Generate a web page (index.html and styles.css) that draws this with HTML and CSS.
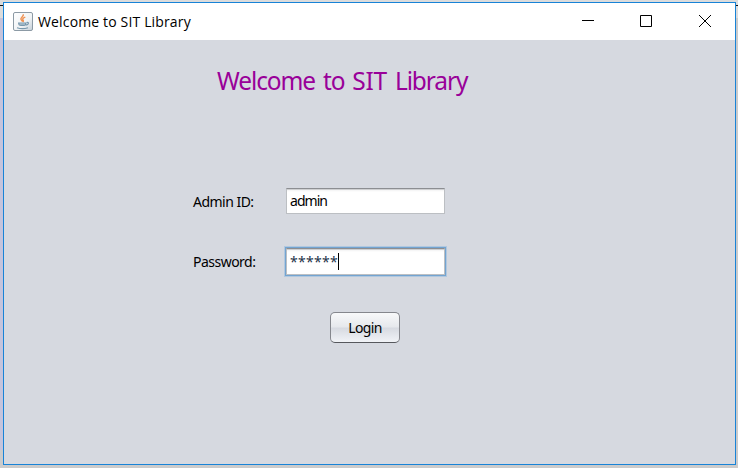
FILE: index.html
```html
<!DOCTYPE html>
<html lang="en">
<head>
<meta charset="utf-8">
<title>Welcome to SIT Library</title>
<link rel="stylesheet" href="styles.css">
</head>
<body>
<main class="window">
  <header class="titlebar">
    <svg class="app-icon" width="20" height="19" viewBox="0 0 20 19">
      <defs><linearGradient id="tile" x2="1" y2="1"><stop offset="0" stop-color="#fff"/><stop offset=".6" stop-color="#f0f3f5"/><stop offset="1" stop-color="#c3ced7"/></linearGradient></defs>
      <rect x=".5" y=".5" width="19" height="18" rx="1.5" fill="url(#tile)" stroke="#8c9aa5"/>
      <path d="M10.200 2.300c1 2.200-3.200 3-2.200 5.200.3.8 1.200 1.300 1.500 2M12.300 5.200c-2.300.8-3.200 1.700-2.200 2.900.6.8.3 1.400-.4 1.900" fill="none" stroke="#ef9050" stroke-width="1.400"/>
      <path d="M5 10.500h8.500c0 2.500-1 3.500-2.500 3.500H8c-2 0-3-1-3-3.500z" fill="#7898ad"/>
      <path d="M6.500 12h5.500" stroke="#d3dfe7" stroke-width=".8"/>
      <path d="M4 15.700c3 1 8 1 11 0M13.500 10.500c2.800-.7 2.500 2-.7 2.700" fill="none" stroke="#7898ad" stroke-width="1.200"/>
    </svg>
    <span class="caption">Welcome to SIT Library</span>
    <div class="controls">
      <svg width="12" height="12" viewBox="0 0 12 12"><path d="M0 5.500h12"/></svg>
      <svg width="12" height="12" viewBox="0 0 12 12"><path d="M.5.5h11v11H.5z"/></svg>
      <svg width="12" height="12" viewBox="0 0 12 12"><path d="M1 0l12 12M13 0L1 12"/></svg>
    </div>
  </header>
  <section class="content">
    <h1 class="heading">Welcome to <span class="initials">SIT</span> Library</h1>
    <form class="login">
      <div class="row">
        <span class="label">Admin ID:</span>
        <div class="field"><span class="value">admin</span></div>
      </div>
      <div class="row">
        <span class="label">Password:</span>
        <div class="field focused"><span class="stars">******</span><i class="caret"></i></div>
      </div>
      <button class="button" type="button">Login</button>
    </form>
  </section>
</main>
</body>
</html>
```
FILE: styles.css
```css
* { box-sizing: border-box; }
body {
  margin: 0;
  width: 738px;
  height: 468px;
  padding: 2px 2px 3px 3px;
  overflow: hidden;
  background:
    linear-gradient(#111, #111) 0 5px / 3px 1px no-repeat,
    linear-gradient(#111, #111) 736px 5px / 2px 1px no-repeat,
    linear-gradient(#c5c4dc, #c5c4dc) 0 18px / 3px 432px no-repeat,
    linear-gradient(#dcdcdc, #dcdcdc) 0 0 / 738px 18px no-repeat,
    #cbcbcb;
  color: #000;
  font-family: "Noto Sans", "DejaVu Sans", sans-serif;
}
.window {
  width: 733px;
  height: 463px;
  border: 1px solid #1883d7;
  background: #d6d9e0;
}
.titlebar {
  display: flex;
  align-items: center;
  height: 37px;
  padding: 0 25px 0 9px;
  background: #fff;
}
.app-icon { margin-top: -1px; }
.caption {
  margin: 1px 0 0 5px;
  font: 14px/20px "Open Sans", sans-serif;
  letter-spacing: 0.15px;
  white-space: nowrap;
}
.controls { display: flex; gap: 46px; margin-left: auto; margin-top: -1px; }
.controls svg { fill: none; stroke: #000; stroke-width: 1; overflow: visible; }
.content { padding: 25px 0 0 189px; }
.heading {
  margin: 0 0 0 24px;
  height: 32px;
  font-size: 24.5px;
  font-weight: 400;
  line-height: 32px;
  letter-spacing: -1.1px;
  word-spacing: 2.6px;
  color: #990099;
  white-space: nowrap;
}
.initials { letter-spacing: -0.2px; }
.login { margin-top: 88px; font-size: 14px; }
.row { display: flex; align-items: center; height: 32px; margin-bottom: 28px; }
.label { width: 93px; padding-top: 2px; line-height: 20px; white-space: nowrap; letter-spacing: -0.52px; }
.field {
  display: flex;
  align-items: center;
  width: 159px;
  height: 26px;
  padding-left: 3px;
  border: 1px solid #bcbfc3;
  border-top: 1px solid #8c8e92;
  background: linear-gradient(#cfd0d2 1px, #f3f3f4 1px, #fff 3px);
}
.value { letter-spacing: -0.95px; margin-top: -2px; }
.focused { height: 27px; box-shadow: 0 0 0 1px #73a4d1, 0 0 0 2px #b1c8df; }
.stars { letter-spacing: 0.3px; color: #24344a; }
.caret { width: 1px; height: 17px; background: #000; }
.button {
  display: block;
  width: 70px;
  height: 31px;
  margin: 35px 0 0 137px;
  padding: 0 0 1px;
  border: 1px solid #85878d;
  border-bottom-color: #56585d;
  border-radius: 5px;
  background: linear-gradient(#f8f9fa, #e6e8ec 48%, #d7dae1 52%, #f1f3f7);
  color: #000;
  font: inherit;
  letter-spacing: -0.6px;
}
```
